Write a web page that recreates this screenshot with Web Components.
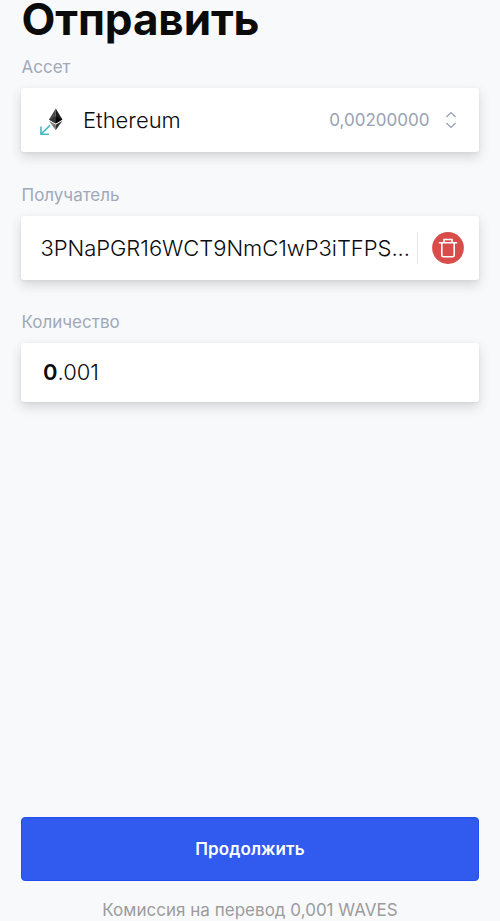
<!DOCTYPE html>
<html lang="ru"><head><meta charset="utf-8"><title>Отправить</title>
<style>
html,body{margin:0;height:100%}
body{background:#f8f9fb;font-family:Inter,"Liberation Sans",sans-serif;color:#0b0b0c;overflow:hidden}
</style></head><body>
<send-screen></send-screen>
<script>
const define=(name,html)=>customElements.define(name,class extends HTMLElement{
  constructor(){super();this.attachShadow({mode:'open'}).innerHTML=html;}
});

define('field-card',`<style>
:host{display:block}
.label{height:20px;line-height:20px;padding-left:.5px;font-size:17px;color:#a0a9b8;white-space:nowrap}
.card{box-sizing:border-box;display:flex;align-items:center;height:var(--card-height,64px);margin-top:11px;background:#fff;border-radius:3px;box-shadow:0 5px 12px rgba(30,35,45,.16),0 1px 3px rgba(30,35,45,.06)}
</style><div class="label"><slot name="label"></slot></div><div class="card"><slot></slot></div>`);

define('asset-icon',`<style>:host{display:block;width:28px;height:30px;flex:none}svg{display:block}</style>
<svg width="28" height="30" viewBox="0 0 28 30">
<path d="M17.7 3.5 11 14.4 17.7 18.4Z" fill="#4a4a4a"/><path d="M17.7 3.5V18.4L24.4 14.4Z" fill="#1c1c1c"/>
<path d="M17.7 11.4 11 14.4 17.7 18.4Z" fill="#333"/><path d="M17.7 11.4V18.4L24.4 14.4Z" fill="#080808"/>
<path d="M11 15.8 17.7 19.8V25.3Z" fill="#777"/><path d="M24.4 15.8 17.7 19.8V25.3Z" fill="#333"/>
<path d="M12 20.3 3 29" fill="none" stroke="#fff" stroke-width="3.6"/>
<path d="M12 20.4 3.2 29M3 21.5V29.2H11" fill="none" stroke="#49b6c4" stroke-width="1.6"/></svg>`);

define('sort-icon',`<style>:host{display:block;width:12px;height:18px;flex:none}svg{display:block}</style>
<svg width="12" height="18" viewBox="0 0 12 18" fill="none" stroke="#929daf" stroke-width="1.2"><path d="M1.4 6 6 1.6 10.6 6M1.4 12 6 16.4 10.6 12"/></svg>`);

define('delete-button',`<style>:host{display:block;width:32px;height:32px;flex:none}svg{display:block}</style>
<svg width="32" height="32" viewBox="0 0 32 32"><circle cx="16" cy="16" r="15.9" fill="#d84c4a"/>
<path d="M6.8 10.8H25.2M9.8 10.8V23.2Q9.8 24.8 11.4 24.8H20.6Q22.2 24.8 22.2 23.2V10.8M12 10.5V7.5H20V10.5" fill="none" stroke="#fff" stroke-width="1.6"/></svg>`);

define('primary-button',`<style>:host{display:block}
button{box-sizing:border-box;display:block;width:100%;height:64px;margin:0;padding:0;border:1px solid #244eec;border-radius:4px;background:#305bee;color:#fff;font:600 17px/62px Inter,sans-serif;letter-spacing:.1px}
</style><button><slot></slot></button>`);

define('send-screen',`<style>
:host{box-sizing:border-box;display:flex;flex-direction:column;height:921px;padding:0 21px}
h1{margin:0 0 0 .5px;height:57px;font-size:44px;line-height:38px;font-weight:700;letter-spacing:-.1px;white-space:nowrap}
field-card+field-card{margin-top:33px}
field-card+field-card+field-card{margin-top:32px}
asset-icon{margin-left:17px}
.name,.addr,.qty{font-size:22px;line-height:28px;white-space:nowrap;font-weight:350}
.name{margin-left:17px}
.amount{margin-left:auto;font-size:17px;color:#98a2b3}
sort-icon{margin:0 22.5px 0 15px}
.addr{margin-left:19.5px;letter-spacing:-.04px;margin-top:-1px}
i{display:block;width:1px;height:32px;background:#e3e5e8;margin-left:auto}
delete-button{margin:0 15px 0 14px}
.qty{margin-left:22px;margin-top:-2px}.qty b{font-weight:600}
primary-button{margin-top:auto}
footer{height:40px;text-align:center;color:#9c9c9c;font-size:17px;letter-spacing:.02px;line-height:58px;white-space:nowrap}
</style>
<h1>Отправить</h1>
<field-card><span slot="label">Ассет</span><asset-icon></asset-icon><span class="name">Ethereum</span><span class="amount">0,00200000</span><sort-icon></sort-icon></field-card>
<field-card><span slot="label">Получатель</span><span class="addr">3PNaPGR16WCT9NmC1wP3iTFPS...</span><i></i><delete-button></delete-button></field-card>
<field-card style="--card-height:59px"><span slot="label">Количество</span><span class="qty"><b>0</b>.001</span></field-card>
<primary-button>Продолжить</primary-button>
<footer>Комиссия на перевод 0,001 WAVES</footer>`);
</script></body></html>
